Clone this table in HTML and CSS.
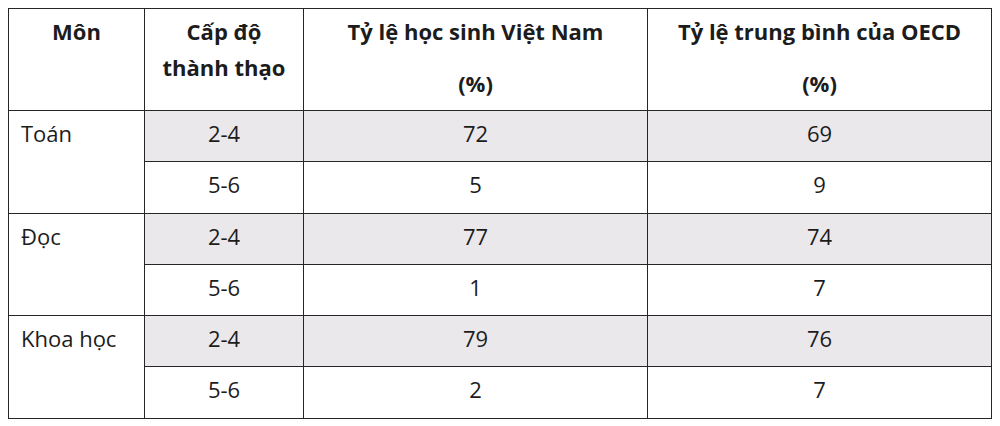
FILE: index.html
```html
<!DOCTYPE html>
<html lang="vi">
<head>
<meta charset="utf-8">
<title>PISA</title>
<link rel="stylesheet" href="styles.css">
</head>
<body>
<table class="data">
  <colgroup>
    <col class="c1"><col class="c2"><col class="c3"><col class="c4">
  </colgroup>
  <thead>
    <tr class="head">
      <th>Môn</th>
      <th>Cấp độ<br>thành thạo</th>
      <th><div>Tỷ lệ học sinh Việt Nam</div><div class="pct">(%)</div></th>
      <th><div>Tỷ lệ trung bình của OECD</div><div class="pct">(%)</div></th>
    </tr>
  </thead>
  <tbody>
    <tr class="shade">
      <td class="subj" rowspan="2">Toán</td><td>2-4</td><td>72</td><td>69</td>
    </tr>
    <tr>
      <td>5-6</td><td>5</td><td>9</td>
    </tr>
    <tr class="shade">
      <td class="subj" rowspan="2">Đọc</td><td>2-4</td><td>77</td><td>74</td>
    </tr>
    <tr>
      <td>5-6</td><td>1</td><td>7</td>
    </tr>
    <tr class="shade">
      <td class="subj" rowspan="2">Khoa học</td><td>2-4</td><td>79</td><td>76</td>
    </tr>
    <tr>
      <td>5-6</td><td>2</td><td>7</td>
    </tr>
  </tbody>
</table>
</body>
</html>
```

FILE: styles.css
```css
html, body {
  margin: 0;
  padding: 0;
  background: #ffffff;
}
body {
  padding: 8px;
  font-family: "Open Sans", "Noto Sans", sans-serif;
  color: #1c1c1c;
}
.data {
  border-collapse: collapse;
  table-layout: fixed;
  width: 983px;
  font-size: 22px;
  line-height: 36px;
}
.c1 { width: 136px; }
.c2 { width: 159px; }
.c3 { width: 344px; }
.c4 { width: 344px; }
.data th,
.data td {
  border: 1px solid #262626;
  vertical-align: top;
  text-align: center;
  padding: 4px 8px 0 8px;
}
.data th {
  font-weight: 700;
  box-sizing: border-box;
  padding-top: 4px;
}
.head th { height: 102px; }
.pct { margin-top: 16px; }
.data td { height: 51.3px; box-sizing: border-box; font-weight: 400; }
.data td.subj {
  text-align: left;
  padding-left: 12px;
  background: #ffffff;
}
.shade td { background: #eae8eb; }
.shade td.subj { background: #ffffff; }
```
